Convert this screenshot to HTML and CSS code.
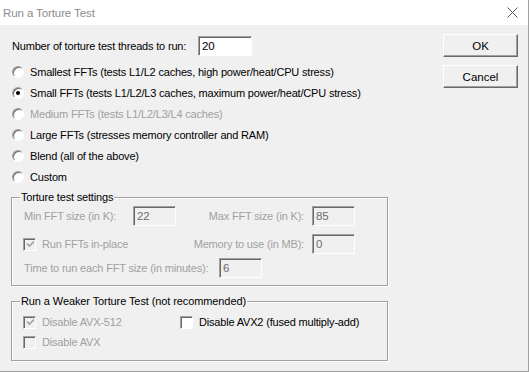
FILE: index.html
```html
<!DOCTYPE html>
<html lang="en">
<head>
    <meta charset="UTF-8">
    <title>Run a Torture Test</title>
    <link rel="stylesheet" href="styles.css">
</head>
<body>
    <div class="window">
        <div class="titlebar">
            <span class="title">Run a Torture Test</span>
            <svg class="close" viewBox="0 0 11 11"><path d="M0.5 0.5L10.5 10.5M10.5 0.5L0.5 10.5" stroke="#555" stroke-width="1" fill="none"/></svg>
        </div>

        <div class="dialog">
            <div class="main">
                <div class="threads">
                    <label>Number of torture test threads to run:</label>
                    <span class="field">20</span>
                </div>

                <ul class="options">
                    <li><span class="radio"></span>Smallest FFTs (tests L1/L2 caches, high power/heat/CPU stress)</li>
                    <li><span class="radio checked"></span>Small FFTs (tests L1/L2/L3 caches, maximum power/heat/CPU stress)</li>
                    <li class="off"><span class="radio"></span>Medium FFTs (tests L1/L2/L3/L4 caches)</li>
                    <li><span class="radio"></span>Large FFTs (stresses memory controller and RAM)</li>
                    <li><span class="radio"></span>Blend (all of the above)</li>
                    <li><span class="radio"></span>Custom</li>
                </ul>

                <fieldset class="group settings">
                    <legend>Torture test settings</legend>
                    <div class="row r1 off">
                        <span class="lead">Min FFT size (in K):</span>
                        <span class="field off">22</span>
                        <span class="rlabel">Max FFT size (in K):</span>
                        <span class="field off">85</span>
                    </div>
                    <div class="row r2 off">
                        <span class="lead wide"><span class="check off checked"><svg viewBox="0 0 9 9"><path d="M1 3.5L3.5 6L8 1.5" stroke="#a0a0a0" stroke-width="1.6" fill="none"/></svg></span>Run FFTs in-place</span>
                        <span class="rlabel">Memory to use (in MB):</span>
                        <span class="field off">0</span>
                    </div>
                    <div class="row r3 off">
                        <span class="lead long">Time to run each FFT size (in minutes):</span>
                        <span class="field off">6</span>
                    </div>
                </fieldset>

                <fieldset class="group weaker">
                    <legend>Run a Weaker Torture Test (not recommended)</legend>
                    <div class="row w1">
                        <span class="item off"><span class="check off checked"><svg viewBox="0 0 9 9"><path d="M1 3.5L3.5 6L8 1.5" stroke="#a0a0a0" stroke-width="1.6" fill="none"/></svg></span>Disable AVX-512</span>
                        <span class="item"><span class="check"></span>Disable AVX2 (fused multiply-add)</span>
                    </div>
                    <div class="row w2">
                        <span class="item off"><span class="check off"></span>Disable AVX</span>
                    </div>
                </fieldset>
            </div>

            <div class="side">
                <button>OK</button>
                <button>Cancel</button>
            </div>
        </div>
    </div>
</body>
</html>
```

FILE: styles.css
```css
* {
    box-sizing: border-box;
}

body {
    margin: 0;
    background: #f0f0f0;
    font-family: 'Liberation Sans', Arial, sans-serif;
    font-size: 11px;
    letter-spacing: -0.18px;
    color: #000;
}

.window {
    width: 529px;
    height: 372px;
    display: flex;
    flex-direction: column;
    border-right: 1px solid #a0a0a0;
    border-bottom: 1px solid #a0a0a0;
    overflow: hidden;
}

.titlebar {
    height: 25px;
    flex: 0 0 25px;
    background: #fff;
    display: flex;
    align-items: center;
    justify-content: space-between;
    padding: 0 10px 0 3px;
}

.title {
    color: #8c8c8c;
    font-size: 11.5px;
    letter-spacing: -0.1px;
}

.close {
    width: 11px;
    height: 11px;
}

.dialog {
    flex: 1;
    display: flex;
}

.main {
    width: 400px;
    padding-left: 12px;
}

.threads {
    display: flex;
    align-items: center;
    height: 20px;
    margin-top: 11px;
}

.threads label {
    width: 186px;
}

.field {
    width: 43px;
    height: 20px;
    border: 1px solid;
    border-color: #a0a0a0 #fff #fff #a0a0a0;
    box-shadow: inset 1px 1px #696969;
    background: #fff;
    padding-left: 3px;
    line-height: 18px;
    font-size: 11.5px;
}

.threads .field {
    width: 54px;
}

.field.off {
    background: #f0f0f0;
    color: #6d6d6d;
}

.off {
    color: #a0a0a0;
}

.options {
    list-style: none;
    margin: 5px 0 0;
    padding: 0;
}

.options li {
    height: 21px;
    display: flex;
    align-items: center;
}

.radio {
    width: 12px;
    height: 12px;
    border-radius: 50%;
    border: 1px solid;
    border-color: #a0a0a0 #fff #fff #a0a0a0;
    box-shadow: inset 1px 1px #696969;
    background: #fff;
    margin-right: 6px;
    display: flex;
    align-items: center;
    justify-content: center;
}

.radio.checked::after {
    content: "";
    width: 4px;
    height: 4px;
    border-radius: 50%;
    background: #000;
}

.group {
    width: 377px;
    margin: 4px 0 0 -1px;
    padding: 0 0 7px 8px;
    border: 1px solid #a0a0a0;
    box-shadow: 1px 1px 0 #fff, inset 1px 1px 0 #fff;
    min-width: 0;
}

.group legend {
    padding: 0 1px;
    line-height: 13px;
    background: #f0f0f0;
}

.weaker {
    margin-top: 9px;
    padding-bottom: 10px;
}

.weaker legend {
    letter-spacing: -0.1px;
}

.row {
    display: flex;
    align-items: center;
    height: 20px;
    margin-left: 4px;
}

.r1 { margin-top: 2px; }
.r2 { margin-top: 8px; }
.r3 { margin-top: 4px; }

.lead {
    width: 109px;
}

.lead.wide {
    width: 152px;
    display: flex;
    align-items: center;
}

.lead.long {
    width: 195px;
}

.rlabel {
    width: 128px;
    text-align: right;
    margin-right: 8px;
}

.check {
    width: 13px;
    height: 13px;
    border: 1px solid;
    border-color: #a0a0a0 #fff #fff #a0a0a0;
    box-shadow: inset 1px 1px #696969;
    background: #fff;
    margin-right: 6px;
    display: flex;
    align-items: center;
    justify-content: center;
}

.wide .check {
    margin-left: -1px;
}

.check.off {
    background: #f0f0f0;
}

.check svg {
    width: 9px;
    height: 9px;
    margin: 1px 0 0 1px;
}

.weaker .row {
    height: 16px;
    margin-left: 3px;
}

.w1 { margin-top: 6px; }
.w2 { margin-top: 4px; }

.item {
    display: flex;
    align-items: center;
    width: 157px;
}

.item:last-child {
    width: auto;
}

.side {
    margin-left: auto;
    padding: 9px 10px 0 0;
    display: flex;
    flex-direction: column;
    gap: 8px;
}

button {
    width: 75px;
    height: 23px;
    font: inherit;
    font-size: 11.5px;
    letter-spacing: 0;
    color: #000;
    background: #f0f0f0;
    border: 1px solid;
    border-color: #fff #696969 #696969 #fff;
    box-shadow: inset -1px -1px #a0a0a0;
    padding: 0;
}
```
